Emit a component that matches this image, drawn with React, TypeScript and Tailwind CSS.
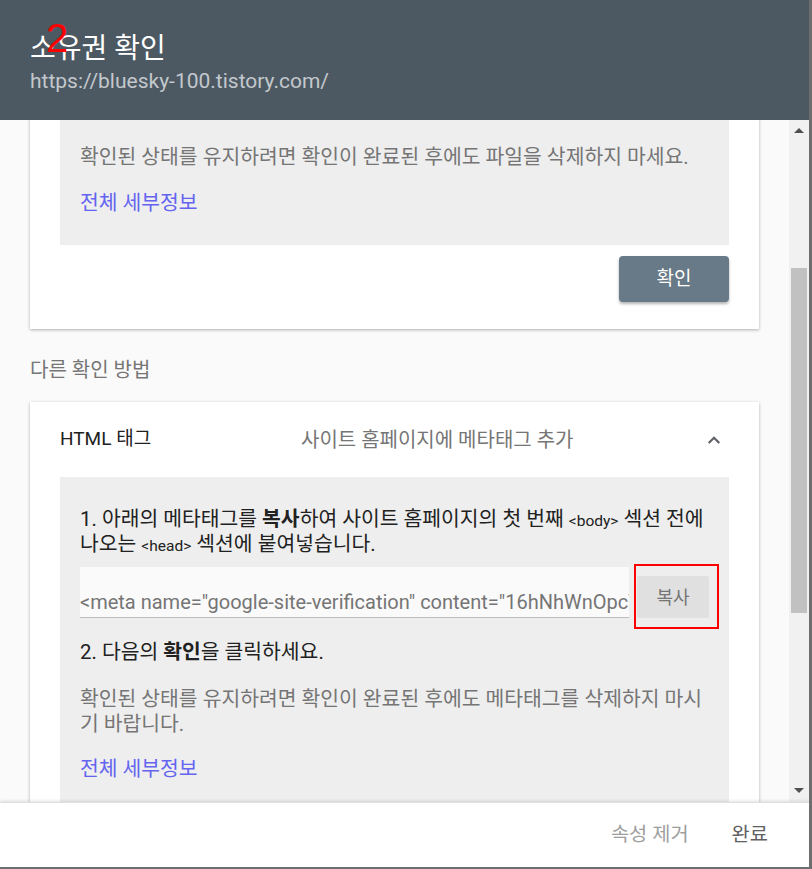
import React from 'react';

const font = { fontFamily: 'Roboto, "Noto Sans CJK KR", sans-serif' };

function ChevronUp() {
  return (
    <svg width="18" height="18" viewBox="0 0 24 24" fill="none" stroke="#5f6368" strokeWidth="3" strokeLinecap="square">
      <path d="M6 15l6-6 6 6" />
    </svg>
  );
}

function Scrollbar() {
  return (
    <div className="w-[20px] bg-[#f1f1f1] flex flex-col">
      <div className="h-[17px] flex items-center justify-center pt-[4px]">
        <div className="w-0 h-0 border-l-[5px] border-r-[5px] border-b-[5px] border-l-transparent border-r-transparent border-b-[#505050]" />
      </div>
      <div className="flex-1 px-[2px]">
        <div className="mt-[131px] h-[345px] bg-[#c1c1c1]" />
      </div>
      <div className="h-[17px] flex items-center justify-center pb-[6px]">
        <div className="w-0 h-0 border-l-[5px] border-r-[5px] border-t-[5px] border-l-transparent border-r-transparent border-t-[#505050]" />
      </div>
    </div>
  );
}

export default function App() {
  return (
    <div style={font} className="w-[812px] h-[869px] flex flex-col border-r-[3px] border-b-[2px] border-[#6e6e6e] overflow-hidden bg-white">
      <header className="relative h-[120px] shrink-0 bg-[#4c5963] px-[30px] pt-[32px]">
        <h1 className="text-[28px] leading-[34px] text-white">소유권 확인</h1>
        <p className="mt-[1px] text-[21px] leading-[28px] text-[#c3c8cc]">https://bluesky-100.tistory.com/</p>
        <span
          className="absolute left-[46px] top-[18px] text-[40px] leading-none text-[#ff0000]"
          style={{ fontFamily: '"Liberation Sans", Arial, sans-serif' }}
        >
          2
        </span>
      </header>

      <div className="flex flex-1 min-h-0">
        <div className="flex-1 bg-[#fafafa] overflow-hidden">
          <div className="-mt-[23px] px-[30px]">
            <div className="bg-white shadow-[0_1px_3px_rgba(0,0,0,0.3)] px-[30px] pb-[27px]">
              <div className="bg-[#eeeeee] pl-[20px] pr-[10px] pb-[30px]">
                <p className="text-[20.4px] leading-[24px] text-[#212121]">
                  2. https://bluesky-100.tistory.com/에 파일을 업로드합니다.
                </p>
                <p className="mt-[24px] text-[20.4px] leading-[24px] text-[#757575]">
                  확인된 상태를 유지하려면 확인이 완료된 후에도 파일을 삭제하지 마세요.
                </p>
                <a className="block mt-[22px] text-[20.4px] leading-[24px] text-[#6464f0]">전체 세부정보</a>
              </div>
              <div className="flex justify-end mt-[11px]">
                <button className="w-[110px] h-[46px] rounded-[4px] bg-[#687a87] text-white text-[19px] shadow-[0_2px_3px_rgba(0,0,0,0.3)]">
                  확인
                </button>
              </div>
            </div>

            <p className="mt-[29px] text-[20px] leading-[24px] text-[#757575]">다른 확인 방법</p>

            <div className="mt-[20px] bg-white shadow-[0_1px_3px_rgba(0,0,0,0.3)] px-[30px]">
              <div className="h-[75px] flex items-center">
                <span className="w-[241px] text-[19px] text-[#212121]">HTML 태그</span>
                <span className="flex-1 text-[20px] text-[#757575]">사이트 홈페이지에 메타태그 추가</span>
                <span className="mr-[6px] flex">
                  <ChevronUp />
                </span>
              </div>

              <div className="bg-[#eeeeee] pl-[20px] pr-[10px] pt-[30px] pb-[40px]">
                <p className="text-[20.4px] leading-[25px] text-[#212121]">
                  1. 아래의 메타태그를 <b>복사</b>하여 사이트 홈페이지의 첫 번째{' '}
                  <code className="text-[15.5px] leading-none" style={font}>&lt;body&gt;</code> 섹션 전에 나오는{' '}
                  <code className="text-[15.5px] leading-none" style={font}>&lt;head&gt;</code> 섹션에 붙여넣습니다.
                </p>

                <div className="mt-[10px] mr-[10px] flex items-end gap-[8px]">
                  <div className="flex-1 min-w-0 h-[51px] bg-[#fafafa] border-b border-[#bdbdbd] flex items-end overflow-hidden">
                    <span className="whitespace-nowrap text-[20px] leading-[26px] pb-[2px] text-[#757575]">
                      &lt;meta name="google-site-verification" content="16hNhWnOpcYJb0r8xKq2" /&gt;
                    </span>
                  </div>
                  <div className="relative">
                    <button className="w-[72px] h-[42px] rounded-[2px] bg-[#e0e0e0] text-[18px] text-[#757575]">
                      복사
                    </button>
                    <div className="absolute -left-[3px] -top-[12px] w-[85px] h-[65px] border-2 border-[#ff0000]" />
                  </div>
                </div>

                <p className="mt-[22px] text-[20.4px] leading-[25px] text-[#212121]">
                  2. 다음의 <b>확인</b>을 클릭하세요.
                </p>
                <p className="mt-[22px] text-[20.4px] leading-[25px] text-[#757575]">
                  확인된 상태를 유지하려면 확인이 완료된 후에도 메타태그를 삭제하지 마시기 바랍니다.
                </p>
                <a className="block mt-[20px] text-[20.4px] leading-[25px] text-[#6464f0]">전체 세부정보</a>
              </div>
            </div>
          </div>
        </div>
        <Scrollbar />
      </div>

      <footer className="h-[65px] shrink-0 bg-white border-t border-[#e0e0e0] shadow-[0_-1px_3px_rgba(0,0,0,0.12)] flex items-center justify-end gap-[43px] pr-[41px]">
        <button className="text-[19.8px] text-[#9e9e9e]">속성 제거</button>
        <button className="text-[19.8px] text-[#616161]">완료</button>
      </footer>
    </div>
  );
}
